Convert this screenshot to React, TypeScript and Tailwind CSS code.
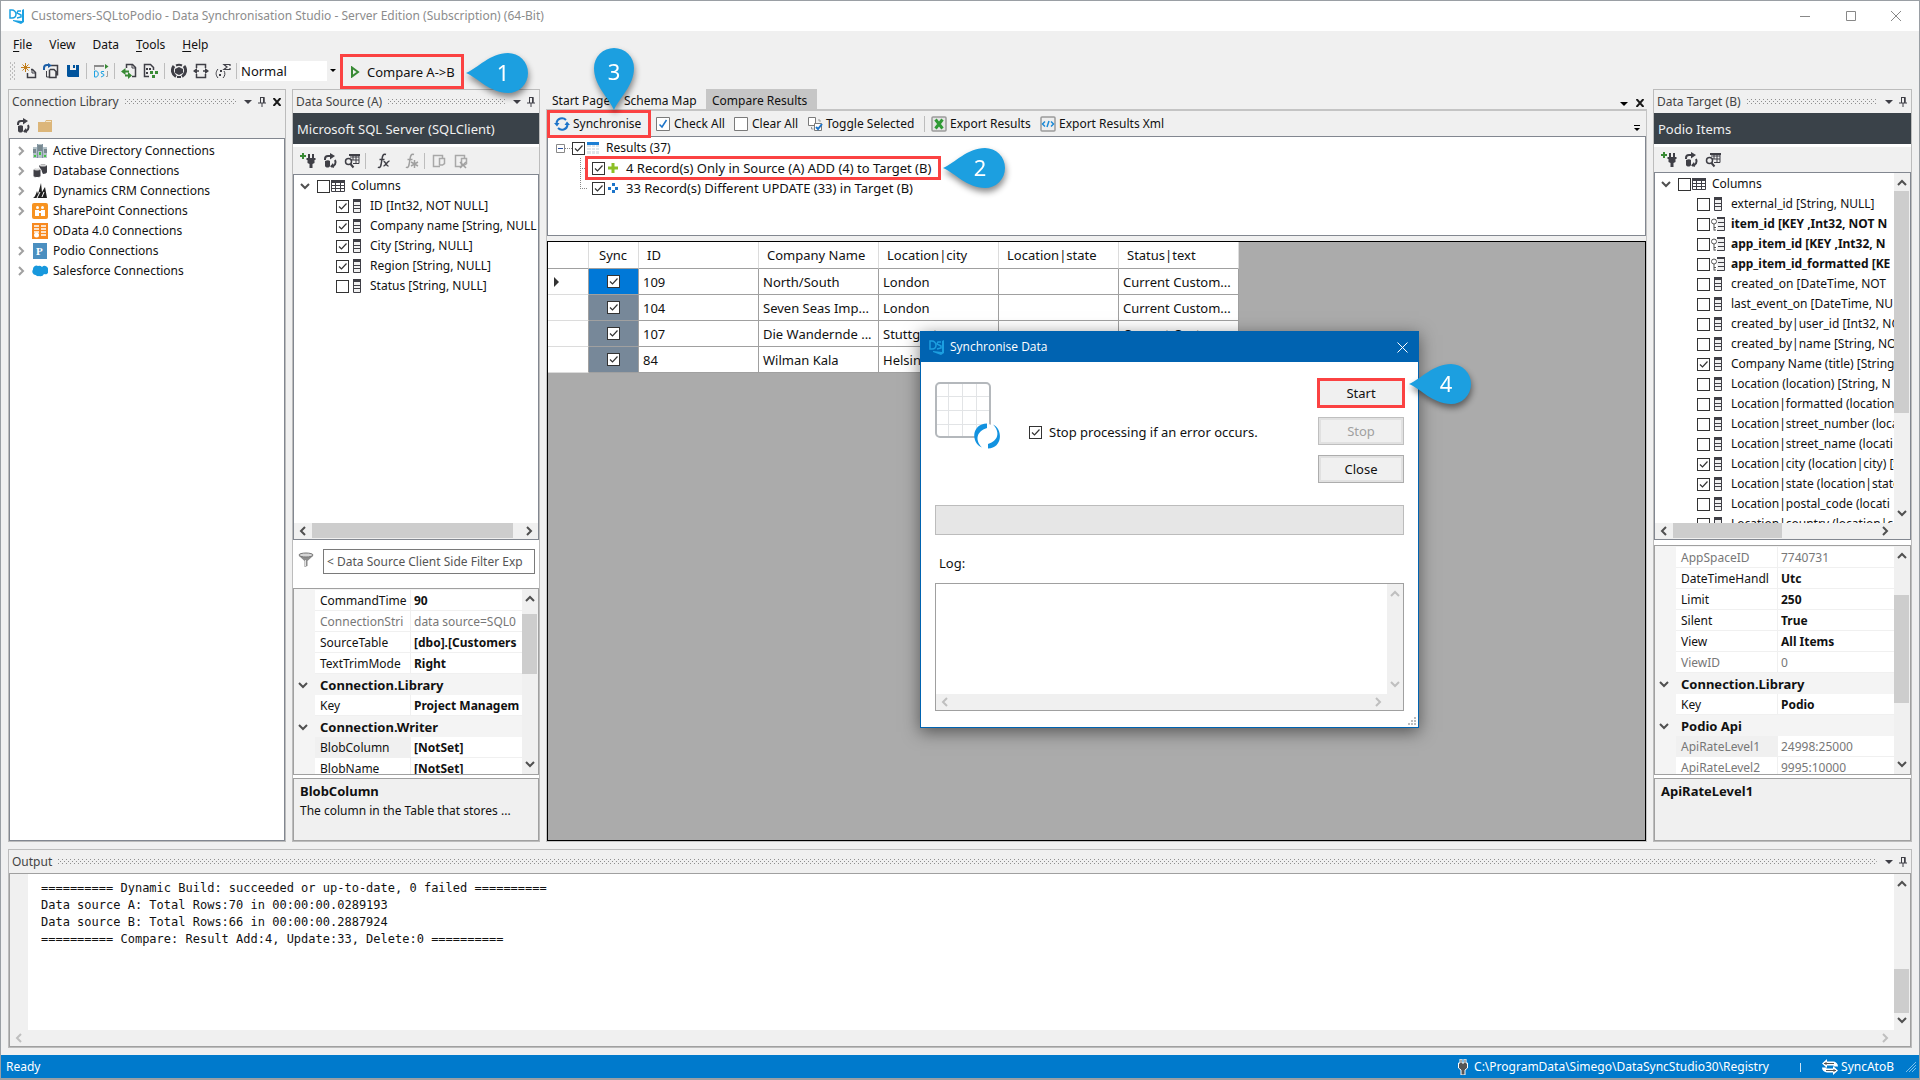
import { useId, type ReactNode } from "react";
import { clsx } from "clsx";

const ink = "#3f3f46";

/* ---------- icons ---------- */

function Icon({ w = 16, h = 16, children }: { w?: number; h?: number; children: ReactNode }) {
  return (
    <svg width={w} height={h} viewBox={`0 0 ${w} ${h}`} fill="none" className="shrink-0" aria-hidden="true">
      {children}
    </svg>
  );
}

function Logo({ color = "#1ba1e2" }: { color?: string }) {
  return (
    <Icon>
      <path d="M1 2v8h2c3 0 4-2 4-4S5 2 3 2z" stroke={color} strokeWidth="1.500" />
      <path d="M12 3H9L8 5l4 2v2l-4 1" stroke={color} strokeWidth="1.500" />
      <path d="M13 2l2-1v13l-3 2-8-3v-1l9 1z" fill={color} />
    </Icon>
  );
}

const NewIcon = () => (
  <Icon>
    <path d="M4.500 0v9M0 4.500h9M1.500 1.500l6 6M7.500 1.500l-6 6" stroke="#c27d1a" />
    <path d="M10 6.500h1.500l3 3v5h-8V10" stroke={ink} strokeWidth="1.500" />
    <path d="M11 6v4h4" stroke={ink} />
  </Icon>
);

const OpenIcon = () => (
  <Icon>
    <path d="M8 2.500h6.500v10M7 6.500h4l2 2v6H6.500v-8" stroke={ink} strokeWidth="1.500" />
    <path d="M1 7V5a3 3 0 0 1 3-3h2" stroke="#1c5fa8" strokeWidth="2" />
    <path d="M5 0l4 2.500-4 2.500z" fill="#1c5fa8" />
    <path d="M3.500 8v6H6" stroke={ink} />
  </Icon>
);

const SaveIcon = () => (
  <Icon>
    <path d="M2 2h12v12H3l-1-1z" fill="#00539c" />
    <path d="M5 2h6v5H5z" fill="#f0f0f0" />
    <path d="M8 2h2v3H8z" fill="#00539c" />
  </Icon>
);

const StudioIcon = () => (
  <Icon>
    <path d="M1.500 7V2.500h9M14.500 8v5.500H13" stroke="#a0a0a0" />
    <path d="M1 2h10v2H1z" fill="#8a8a8a" />
    <path d="M12 1l3.500 2.500L12 6z" fill="#388a34" />
    <path d="M1.500 8v6H3c3 0 3-6 0-6zM11 8.500H8.500L8 10l3 1.500v1L8 14" stroke="#1ba1e2" />
  </Icon>
);

const SwapDocIcon = () => (
  <Icon>
    <path d="M5.500 5V1.500h6l3 3v9H11" stroke={ink} strokeWidth="1.500" />
    <path d="M11 1v4h4" stroke={ink} />
    <path d="M2 8.500h6M4 12.500h5" stroke="#388a34" strokeWidth="2" />
    <path d="M4.500 5v7L0 8.500zM7 9v7l4-3.500z" fill="#388a34" />
  </Icon>
);

const DocDotsIcon = () => (
  <Icon>
    <path d="M6 13.500H1.500v-12h6l3 3V7" stroke={ink} strokeWidth="1.500" />
    <path d="M3 5h2v2H3zM3 9h2v2H3zM6 5h2v2H6z" fill={ink} />
    <path d="M7 8h3v3H7zM12 8h3v3h-3zM9 12h3v3H9z" fill="#388a34" />
  </Icon>
);

const BallIcon = () => (
  <Icon>
    <path d="M8 4l4 2v4l-4 2-4-2V6z" fill={ink} />
    <path d="M3 3A7 7 0 0 0 5 13.500M13 3a7 7 0 0 1-2 10.500" stroke={ink} strokeWidth="3" />
    <path d="M5 2.500a7 7 0 0 1 6 0M6 14h4" stroke={ink} strokeWidth="2" />
  </Icon>
);

const FitIcon = () => (
  <Icon>
    <path d="M3.500 5V1.500h9V5M3.500 11v3.500h9V11" stroke={ink} strokeWidth="1.500" />
    <path d="M3 8h3M10 8h3" stroke={ink} strokeWidth="1.500" />
    <path d="M4 5v6L0 8zM12 5v6l4-3z" fill={ink} />
  </Icon>
);

const SigmaIcon = () => (
  <Icon>
    <path d="M3 6C.500 9 .500 12 3 15M9 8c1.500 2 1 5-1 7" stroke={ink} />
    <path d="M5 7h2v2H5zM4 11h2v2H4z" fill={ink} />
    <path d="M15 3V1.500H9l3 2.500-3 2.500h6V5" stroke={ink} strokeWidth="1.200" />
  </Icon>
);

const RefreshIcon = () => (
  <Icon>
    <path d="M3 7V6a3 3 0 0 1 3-3h4M13 7c1.500 3 0 6-4 6.500" stroke={ink} strokeWidth="2" />
    <path d="M8 0l5 3-5 3.500z" fill={ink} />
    <path d="M3 8c2-1 4-1 5 0v5c-1 2-4 2-5 0z" fill={ink} />
    <path d="M11 10l-3 3.500 4 1.500z" fill={ink} />
  </Icon>
);

const PlugAddIcon = () => (
  <Icon>
    <path d="M3 0v6M0 3h6" stroke="#388a34" strokeWidth="2" />
    <path d="M9 1v4M13 1v4" stroke={ink} strokeWidth="2" />
    <path d="M6.500 5h9v2h-1v3l-2 1v4h-3v-4l-2-1V7h-1z" fill={ink} />
  </Icon>
);

const PreviewIcon = () => (
  <Icon>
    <path d="M6 1.500h9v9H9M6 4h9M6 7h9M9 3v4M12 3v8" stroke={ink} />
    <path d="M5 1h11v2H5z" fill={ink} />
    <circle cx="4.500" cy="8.500" r="3" fill="#f0f0f0" stroke={ink} strokeWidth="1.500" />
    <path d="M6.500 11l3 3.500" stroke={ink} strokeWidth="2" />
  </Icon>
);

const FxIcon = ({ off }: { off?: boolean }) => (
  <svg width="16" height="16" viewBox="0 0 16 16" fill="none" stroke={off ? "#a0a0a0" : ink} aria-hidden="true">
    <path d="M11 1.500C8 .500 7.500 3 7 6l-1 6c-.500 2.500-2 3-3 2M4.500 6.500h5" strokeWidth="1.500" />
    {off ? (
      <path d="M11.500 7v8M8 9l7 4M15 9l-7 4" strokeWidth="1.500" />
    ) : (
      <path d="M8.500 8.500c2-1 2.500 5 5 4.500M14.500 8c-2 0-4 5-6 5" strokeWidth="1.500" />
    )}
  </svg>
);

const ScriptIcon = ({ star }: { star?: boolean }) => (
  <Icon>
    <path d="M9 13.500H2.500v-11h9V5" stroke="#a8a8a8" strokeWidth="1.500" />
    <path d="M8.500 5.500h5v5l-2 1.500H8.500z" stroke="#a8a8a8" strokeWidth="1.500" />
    {star && <path d="M7 9l6 6M13 9l-6 6" stroke="#a0a0a0" strokeWidth="1.500" />}
  </Icon>
);

const FolderIcon = () => (
  <Icon>
    <path d="M1 4h7l1-2h6v12H1z" fill="#dcb67a" />
    <path d="M9 3.500h5" stroke="#f4e6c8" />
  </Icon>
);

const DirectoryIcon = () => (
  <Icon>
    <path d="M1 4h5v11H1zM10 4h5v11h-5zM5 1h6v14H5z" fill="#b4c2c8" />
    <path d="M6 3h4M6 5h4M6 7h4M1 7h3M1 9h3M12 7h3M12 9h3" stroke="#3e5058" />
    <path d="M7 9h2v3H7zM2 12h2v2H2zM12 12h2v2h-2z" fill="#43c443" />
    <path d="M5.500 1v14M10.500 1v14" stroke="#8093a0" />
  </Icon>
);

const DatabaseIcon = () => (
  <Icon>
    <path d="M7 3c0-2 8-2 8 0v6c0 1-2 2-4 2z" fill={ink} />
    <ellipse cx="11" cy="2.500" rx="3.500" ry="1" fill="#d8d8d8" />
    <path d="M1 7c0-2 8-2 8 0v6c0 2-8 2-8 0z" fill={ink} stroke="#fff" />
    <ellipse cx="5" cy="6.500" rx="3" ry="1" fill="#d8d8d8" />
  </Icon>
);

const DynamicsIcon = () => (
  <Icon>
    <path d="M1 15c2-1 3-4 4-7l1 3 3-11 1 9 3-5 2 11z" fill="#1f1f1f" />
    <path d="M5 15l3-6M10 14l2-5" stroke="#fff" />
  </Icon>
);

const SharePointIcon = () => (
  <Icon>
    <rect width="16" height="16" rx="2" fill="#f79321" />
    <path d="M3 7h4v6H3zM9 7h4v6H9zM7 8h2v2H7z" fill="#fff" />
    <circle cx="5.500" cy="4.500" r="1.500" fill="#fff" />
    <circle cx="10.500" cy="4.500" r="1.500" fill="#fff" />
  </Icon>
);

const ODataIcon = () => (
  <Icon>
    <rect width="16" height="16" fill="#f7891f" />
    <path d="M2 3h5M2 6h5M9 3h5M9 6h5M9 9h5M2 9h5M9 12h5" stroke="#fff" strokeWidth="1.500" />
    <circle cx="4.500" cy="12" r="2.500" fill="#fff" />
  </Icon>
);

const PodioIcon = () => (
  <Icon>
    <rect x="1" width="14" height="16" fill="#4b8fc0" />
    <text x="4" y="12" fontSize="11" fontWeight="700" fontFamily="Liberation Serif, serif" fill="#fff">
      P
    </text>
  </Icon>
);

const SalesforceIcon = () => (
  <Icon>
    <path
      d="M3.500 12A3.500 3.500 0 0 1 1 6.500 3.500 3.500 0 0 1 6 3a3.500 3.500 0 0 1 4 1 3.500 3.500 0 0 1 6 3 3 3 0 0 1-4 4 4 4 0 0 1-5 2 3.500 3.500 0 0 1-3.500-1z"
      fill="#1798dd"
    />
  </Icon>
);

const TableIcon = () => (
  <Icon w={14} h={12}>
    <path d="M.500.500h13v11H.500zM0 5.500h14M0 8.500h14M4.500 2v10M9.500 2v10" stroke={ink} />
    <path d="M0 0h14v3H0z" fill={ink} />
  </Icon>
);

const ColumnIcon = () => (
  <Icon w={8} h={14}>
    <path d="M.500.500h7v13h-7zM1 6.500h6M1 9.500h6" fill="#f0f0f0" stroke={ink} />
    <path d="M0 0h8v3H0z" fill={ink} />
  </Icon>
);

const KeyColumnIcon = () => (
  <Icon w={14} h={14}>
    <path d="M6 .500h7.500v13H6M7 5.500h6M7 9.500h6" stroke={ink} fill="#f0f0f0" />
    <path d="M6 0h8v2H6z" fill={ink} />
    <circle cx="3" cy="4.500" r="2.500" fill="#fff" stroke="#555" />
    <path d="M3 7v6.500M3 10.500h2M3 13h2" stroke="#555" />
  </Icon>
);

const SyncIcon = () => (
  <Icon>
    <path d="M2.500 7A5.500 5.500 0 0 1 12 4M13.500 9A5.500 5.500 0 0 1 4 12" stroke="#1d74c9" strokeWidth="2" />
    <path d="M0 7h5.500L3 10.500zM10.500 9H16l-3-3.500z" fill="#1d74c9" />
  </Icon>
);

const CheckAllIcon = () => (
  <Icon>
    <path d="M1.500 1.500h13v13h-13z" fill="#fff" stroke="#7a7a7a" />
    <path d="M4.500 8.500L7 11l4.500-7" stroke="#1d74c9" strokeWidth="1.500" />
  </Icon>
);

const ClearAllIcon = () => (
  <Icon>
    <path d="M1.500 1.500h13v13h-13z" fill="#fff" stroke="#7a7a7a" />
  </Icon>
);

const ToggleIcon = () => (
  <Icon>
    <path d="M1.500 1.500h7v8h-7z" fill="#fff" stroke="#7a7a7a" />
    <path d="M7.500 7.500h7v7h-7z" fill="#fff" stroke="#7a7a7a" />
    <path d="M9 11l2 2 4-5" stroke="#1d74c9" strokeWidth="2" />
    <path d="M4.500 11v2h2M11 4h2v2" stroke="#9a9a9a" />
  </Icon>
);

const ExcelIcon = () => (
  <Icon>
    <rect x="1" y="1" width="14" height="14" rx="1" fill="#e4e4e4" stroke="#9a9a9a" strokeWidth="1.500" />
    <path d="M4.500 3.500l7 9M11.500 3.500l-7 9" stroke="#2f9a35" strokeWidth="3" />
  </Icon>
);

const XmlIcon = () => (
  <Icon>
    <rect x="1" y="1" width="14" height="14" rx="1" fill="#eee" stroke="#9a9a9a" strokeWidth="1.500" />
    <path d="M5 5.500L2.500 8 5 10.500M11 5.500L13.500 8 11 10.500M9 5l-2 6" stroke="#1d8ad6" strokeWidth="1.500" />
  </Icon>
);

const FunnelIcon = () => (
  <Icon>
    <path d="M1 2h14v2L9.500 9v5l-3 1V9L1 4z" fill="#8c8c8c" />
    <ellipse cx="8" cy="3" rx="7" ry="2" fill="#d5d5d5" stroke="#777" />
    <path d="M7.500 8v6" stroke="#e0e0e0" />
  </Icon>
);

const ResultsIcon = () => (
  <Icon w={12} h={12}>
    <path d="M0 0h12v12H0z" fill="#dfe5ea" />
    <path d="M0 0h12v3H0z" fill="#1d7fd4" />
    <path d="M0 5.500h12M0 8.500h12M4.500 3v9M8.500 3v9" stroke="#fff" />
  </Icon>
);

function Caret({ dark }: { dark?: boolean }) {
  return (
    <Icon w={8} h={4}>
      <path d="M0 0h8L4 4z" fill={dark ? "#000" : ink} />
    </Icon>
  );
}

const Pin = () => (
  <Icon w={8} h={10}>
    <path d="M2 .500h4v5M2.500 0v6M0 6h8M4 6v4" stroke={ink} />
    <path d="M5 0h1.500v6H5z" fill={ink} />
  </Icon>
);

const BoldX = () => (
  <Icon w={8} h={8}>
    <path d="M.500 0l7 8M7.500 0l-7 8" stroke="#1a1a1a" strokeWidth="2" />
  </Icon>
);

const arrows = {
  up: "M1 7l4-4 4 4",
  down: "M1 3l4 4 4-4",
  left: "M7 1L3 5l4 4",
  right: "M3 1l4 4-4 4",
};

function Arrow({ dir, color = "#505050" }: { dir: keyof typeof arrows; color?: string }) {
  return (
    <Icon w={10} h={10}>
      <path d={arrows[dir]} stroke={color} strokeWidth="2" />
    </Icon>
  );
}

/* ---------- shared pieces ---------- */

function Check({ checked, label, id }: { checked?: boolean; label?: string; id?: string }) {
  return (
    <span className="grid h-[13px] w-[13px] shrink-0">
      <input
        type="checkbox"
        id={id}
        aria-label={label}
        defaultChecked={checked}
        className="peer h-[13px] w-[13px] appearance-none border border-[#333] bg-white [grid-area:1/1]"
      />
      <svg
        viewBox="0 0 13 13"
        fill="none"
        className="pointer-events-none z-1 hidden h-[13px] w-[13px] peer-checked:block [grid-area:1/1]"
      >
        <path d="M3 6.500L5.500 9l5-5.500" stroke="#333" strokeWidth="1.200" />
      </svg>
    </span>
  );
}

function Dots() {
  const id = useId();
  return (
    <svg className="h-[5px] min-w-0 flex-1" aria-hidden="true">
      <pattern id={id} width="4" height="4" patternUnits="userSpaceOnUse">
        <path d="M0 0h1v1H0zM2 2h1v1H2z" fill="#8f8f8f" />
      </pattern>
      <rect width="100%" height="5" fill={`url(#${id})`} />
    </svg>
  );
}

function PanelHeader({ title, closable }: { title: string; closable?: boolean }) {
  return (
    <header className="flex h-[23px] shrink-0 items-center pr-[2px] pl-[3px]">
      <h2 className="mr-[6px] text-[#444]">{title}</h2>
      <Dots />
      <button aria-label="Window position" className="ml-[6px] w-[14px] pl-[2px]">
        <Caret />
      </button>
      <button aria-label="Auto hide" className="flex w-[12px] justify-center">
        <Pin />
      </button>
      {closable && (
        <button aria-label="Close" className="ml-[3px] flex w-[12px] justify-center">
          <BoldX />
        </button>
      )}
    </header>
  );
}

function ToolButton({ label, children }: { label: string; children: ReactNode }) {
  return (
    <button aria-label={label} className="flex h-[22px] w-[22px] shrink-0 items-center justify-center">
      {children}
    </button>
  );
}

function Sep() {
  return <span className="mr-[3px] ml-[2px] h-4 w-px shrink-0 bg-[#bdbdbd]" />;
}

function VScroll({ thumb, off }: { thumb?: string; off?: boolean }) {
  const color = off ? "#bfbfbf" : "#505050";
  return (
    <div className="relative flex w-4 shrink-0 flex-col items-center justify-between bg-[#f0f0f0] py-[5px]" aria-hidden="true">
      <Arrow dir="up" color={color} />
      {thumb && <span className={clsx("absolute right-px left-0 bg-[#cdcdcd]", thumb)} />}
      <Arrow dir="down" color={color} />
    </div>
  );
}

function HScroll({ thumb, off, corner }: { thumb?: string; off?: boolean; corner?: boolean }) {
  const color = off ? "#bfbfbf" : "#505050";
  return (
    <div
      className={clsx("relative flex h-4 shrink-0 items-center justify-between bg-[#f0f0f0] pb-px pl-1", corner ? "pr-[20px]" : "pr-1")}
      aria-hidden="true"
    >
      <Arrow dir="left" color={color} />
      {thumb && <span className={clsx("absolute top-0 bottom-px bg-[#cdcdcd]", thumb)} />}
      <Arrow dir="right" color={color} />
    </div>
  );
}

function Marker({ n, down, className }: { n: number; down?: boolean; className: string }) {
  return (
    <span className={clsx("pointer-events-none absolute z-30 drop-shadow-[1px_4px_3px_rgba(0,0,0,0.45)]", className)}>
      {down ? (
        <svg width="40" height="62" viewBox="0 0 40 62">
          <path d="M20 62C15 50 0 38 0 20a20 20 0 0 1 40 0C40 38 25 50 20 62z" fill="#1c9fe0" />
          <text x="20" y="32" textAnchor="middle" fontSize="22" fill="#fff">
            {n}
          </text>
        </svg>
      ) : (
        <svg width="62" height="40" viewBox="0 0 62 40">
          <path d="M0 20C12 15 24 0 42 0a20 20 0 0 1 0 40C24 40 12 25 0 20z" fill="#1c9fe0" />
          <text x="37" y="28" textAnchor="middle" fontSize="22" fill="#fff">
            {n}
          </text>
        </svg>
      )}
    </span>
  );
}

/* ---------- data ---------- */

const menus = ["File", "View", "Data", "Tools", "Help"];
const underlined = ["File", "Tools", "Help"];

const connections = [
  { name: "Active Directory Connections", icon: <DirectoryIcon />, open: true },
  { name: "Database Connections", icon: <DatabaseIcon />, open: true },
  { name: "Dynamics CRM Connections", icon: <DynamicsIcon />, open: true },
  { name: "SharePoint Connections", icon: <SharePointIcon />, open: true },
  { name: "OData 4.0 Connections", icon: <ODataIcon />, open: false },
  { name: "Podio Connections", icon: <PodioIcon />, open: true },
  { name: "Salesforce Connections", icon: <SalesforceIcon />, open: true },
];

type Column = { name: string; checked?: boolean; key?: boolean };

const sourceColumns: Column[] = [
  { name: "ID [Int32, NOT NULL]", checked: true },
  { name: "Company name [String, NULL", checked: true },
  { name: "City [String, NULL]", checked: true },
  { name: "Region [String, NULL]", checked: true },
  { name: "Status [String, NULL]" },
];

const targetColumns: Column[] = [
  { name: "external_id [String, NULL]" },
  { name: "item_id [KEY ,Int32, NOT N", key: true },
  { name: "app_item_id [KEY ,Int32, N", key: true },
  { name: "app_item_id_formatted [KE", key: true },
  { name: "created_on [DateTime, NOT" },
  { name: "last_event_on [DateTime, NU" },
  { name: "created_by|user_id [Int32, NO" },
  { name: "created_by|name [String, NO" },
  { name: "Company Name (title) [String", checked: true },
  { name: "Location (location) [String, N" },
  { name: "Location|formatted (location" },
  { name: "Location|street_number (loca" },
  { name: "Location|street_name (locati" },
  { name: "Location|city (location|city) [S", checked: true },
  { name: "Location|state (location|state", checked: true },
  { name: "Location|postal_code (locati" },
  { name: "Location|country (location|c" },
];

type Prop = { name: string; value?: string; muted?: boolean; selected?: boolean };

const sourceProps: Prop[] = [
  { name: "CommandTime", value: "90" },
  { name: "ConnectionStri", value: "data source=SQL0", muted: true },
  { name: "SourceTable", value: "[dbo].[Customers" },
  { name: "TextTrimMode", value: "Right" },
  { name: "Connection.Library" },
  { name: "Key", value: "Project Managem" },
  { name: "Connection.Writer" },
  { name: "BlobColumn", value: "[NotSet]", selected: true },
  { name: "BlobName", value: "[NotSet]" },
];

const targetProps: Prop[] = [
  { name: "AppSpaceID", value: "7740731", muted: true },
  { name: "DateTimeHandl", value: "Utc" },
  { name: "Limit", value: "250" },
  { name: "Silent", value: "True" },
  { name: "View", value: "All Items" },
  { name: "ViewID", value: "0", muted: true },
  { name: "Connection.Library" },
  { name: "Key", value: "Podio" },
  { name: "Podio Api" },
  { name: "ApiRateLevel1", value: "24998:25000", muted: true, selected: true },
  { name: "ApiRateLevel2", value: "9995:10000", muted: true },
];

const records = [
  ["109", "North/South", "London", "", "Current Custom..."],
  ["104", "Seven Seas Imp...", "London", "", "Current Custom..."],
  ["107", "Die Wandernde ...", "Stuttgart", "", "Current Custom..."],
  ["84", "Wilman Kala", "Helsinki", "", "Current Custom..."],
];

const log = [
  "========== Dynamic Build: succeeded or up-to-date, 0 failed ==========",
  "Data source A: Total Rows:70 in 00:00:00.0289193",
  "Data source B: Total Rows:66 in 00:00:00.2887924",
  "========== Compare: Result Add:4, Update:33, Delete:0 ==========",
];

/* ---------- panels ---------- */

function TitleBar() {
  return (
    <div className="flex h-[30px] shrink-0 items-center bg-white pl-2 text-[#8c8c8c]">
      <Logo />
      <h1 className="ml-[6px] flex-1">Customers-SQLtoPodio - Data Synchronisation Studio - Server Edition (Subscription) (64-Bit)</h1>
      <button aria-label="Minimise" className="flex w-[46px] justify-center">
        <Icon w={10} h={10}>
          <path d="M0 5.500h10" stroke="#888" />
        </Icon>
      </button>
      <button aria-label="Maximise" className="flex w-[45px] justify-center">
        <Icon w={10} h={10}>
          <path d="M.500.500h9v9h-9z" stroke="#888" />
        </Icon>
      </button>
      <button aria-label="Close window" className="flex w-[46px] justify-center">
        <Icon w={10} h={10}>
          <path d="M0 0l10 10M10 0L0 10" stroke="#888" />
        </Icon>
      </button>
    </div>
  );
}

function MenuBar() {
  return (
    <nav className="flex h-[24px] shrink-0 items-end gap-[17px] pl-3">
      {menus.map((m) => (
        <button key={m} className="leading-5">
          {underlined.includes(m) ? (
            <>
              <span className="underline underline-offset-2">{m[0]}</span>
              {m.slice(1)}
            </>
          ) : (
            m
          )}
        </button>
      ))}
    </nav>
  );
}

function MainToolbar() {
  return (
    <div className="flex h-[34px] shrink-0 items-start pl-[7px]">
      <div className="flex h-[31px] items-center">
        <svg width="10" height="18" aria-hidden="true">
          <path
            d="M2 1h1M6 1h1M4 3h1M2 5h1M6 5h1M4 7h1M2 9h1M6 9h1M4 11h1M2 13h1M6 13h1M4 15h1M2 17h1M6 17h1"
            stroke="#888"
          />
        </svg>
        <ToolButton label="New project"><NewIcon /></ToolButton>
        <ToolButton label="Open project"><OpenIcon /></ToolButton>
        <ToolButton label="Save"><SaveIcon /></ToolButton>
        <Sep />
        <ToolButton label="New window"><StudioIcon /></ToolButton>
        <Sep />
        <ToolButton label="Swap sources"><SwapDocIcon /></ToolButton>
        <ToolButton label="Project automation"><DocDotsIcon /></ToolButton>
        <Sep />
        <ToolButton label="Build"><BallIcon /></ToolButton>
        <ToolButton label="Fit columns"><FitIcon /></ToolButton>
        <ToolButton label="Calculated columns"><SigmaIcon /></ToolButton>
        <Sep />
        <div className="grid h-5 w-[98px] items-center bg-white">
          <select aria-label="Compare mode" className="h-5 w-full appearance-none pl-px text-[13px] [grid-area:1/1]">
            <option>Normal</option>
          </select>
          <span className="pointer-events-none flex h-5 w-[11px] items-center justify-center justify-self-end bg-[#f0f0f0] [grid-area:1/1]">
            <Icon w={6} h={3}>
              <path d="M0 0h6L3 3z" fill="#000" />
            </Icon>
          </span>
        </div>
      </div>
      <div className="relative ml-[2px] -mt-px">
        <button className="flex h-[35px] w-[124px] items-center gap-[7px] border-3 border-[#fb4242] pl-2 text-[13px] whitespace-nowrap">
          <Icon w={9} h={12}>
            <path d="M1 1.500l6 4.500-6 4.500z" stroke="#388a34" strokeWidth="2" />
          </Icon>
          Compare A-&gt;B
        </button>
        <Marker n={1} className="-top-px left-full ml-[2px]" />
      </div>
    </div>
  );
}

function ConnectionLibrary() {
  return (
    <section className="flex w-[278px] shrink-0 flex-col border border-[#bcbcbc]">
      <PanelHeader title="Connection Library" closable />
      <div className="flex h-[25px] shrink-0 items-center pl-[3px]">
        <ToolButton label="Refresh"><RefreshIcon /></ToolButton>
        <ToolButton label="New folder"><FolderIcon /></ToolButton>
      </div>
      <ul className="flex-1 border border-[#828790] bg-white pt-[2px]">
        {connections.map((c) => (
          <li key={c.name} className="flex h-5 items-center">
            <span className="flex w-[22px] justify-center">{c.open && <Arrow dir="right" color="#a0a0a0" />}</span>
            {c.icon}
            <span className="ml-[5px]">{c.name}</span>
          </li>
        ))}
      </ul>
    </section>
  );
}

function ColumnTree({ columns }: { columns: Column[] }) {
  return (
    <ul className="min-w-0 flex-1 overflow-hidden pt-px">
      <li className="flex h-5 items-center">
        <span className="mr-px flex w-[22px] justify-center">
          <Arrow dir="down" />
        </span>
        <Check label="Columns" />
        <span className="flex w-4 justify-center">
          <TableIcon />
        </span>
        <span className="ml-[5px]">Columns</span>
      </li>
      {columns.map((c) => (
        <li key={c.name} className="flex h-5 items-center pl-[42px] whitespace-nowrap">
          <Check checked={c.checked} label={c.name} />
          <span className="flex w-4 shrink-0 justify-center">{c.key ? <KeyColumnIcon /> : <ColumnIcon />}</span>
          <span className={clsx("ml-[5px]", c.key && "font-bold")}>{c.name}</span>
        </li>
      ))}
    </ul>
  );
}

function PropertyGrid({ rows, nameWidth, thumb }: { rows: Prop[]; nameWidth: string; thumb: string }) {
  return (
    <div className="flex h-full border border-[#a0a0a0] bg-[#f4f4f4]">
      <div className="min-w-0 flex-1 overflow-hidden pt-px">
        <table className="w-full table-fixed border-separate border-spacing-0">
          <colgroup>
            <col className="w-[21px]" />
            <col className={nameWidth} />
            <col />
          </colgroup>
          <tbody>
            {rows.map((r) =>
              r.value === undefined ? (
                <tr key={r.name} className="h-[21px]">
                  <td className="pl-1">
                    <Arrow dir="down" />
                  </td>
                  <th colSpan={2} className="p-0 pl-[5px] text-left text-[13px] leading-5 font-bold">
                    {r.name}
                  </th>
                </tr>
              ) : (
                <tr key={r.name} className={clsx("h-[21px]", r.muted && "text-[#777]")}>
                  <td />
                  <th
                    className={clsx(
                      "overflow-hidden border-r border-b border-[#f0f0f0] p-0 pt-[2px] pl-[5px] text-left leading-[18px] font-normal whitespace-nowrap",
                      r.selected ? "bg-[#f0f0f0]" : "bg-white",
                    )}
                  >
                    {r.name}
                  </th>
                  <td
                    className={clsx(
                      "overflow-hidden border-b border-[#f0f0f0] bg-white p-0 pt-[2px] pl-[3px] leading-[18px] whitespace-nowrap",
                      !r.muted && "font-bold",
                    )}
                  >
                    {r.value}
                  </td>
                </tr>
              ),
            )}
          </tbody>
        </table>
      </div>
      <VScroll thumb={thumb} />
    </div>
  );
}

function Description({ title, text }: { title: string; text?: string }) {
  return (
    <div className="mt-[3px] h-[63px] shrink-0 border border-[#a0a0a0] bg-[#f0f0f0] px-[6px] pt-[2px] leading-5">
      <h3 className="text-[13px] font-bold">{title}</h3>
      <p>{text}</p>
    </div>
  );
}

function DataSource() {
  return (
    <section className="flex w-[248px] shrink-0 flex-col border border-[#bcbcbc] bg-[#f0f0f0]">
      <PanelHeader title="Data Source (A)" />
      <div className="h-[31px] shrink-0 bg-[#3a4249] pl-1 text-[13px] leading-8 text-[#f0f0f0]">Microsoft SQL Server (SQLClient)</div>
      <div className="flex h-[30px] shrink-0 items-center border-t-3 border-white pl-1">
        <ToolButton label="Connect"><PlugAddIcon /></ToolButton>
        <ToolButton label="Refresh source"><RefreshIcon /></ToolButton>
        <ToolButton label="Preview source"><PreviewIcon /></ToolButton>
        <Sep />
        <span className="w-[3px]" />
        <ToolButton label="Add expression"><FxIcon /></ToolButton>
        <span className="w-[6px]" />
        <ToolButton label="Edit expression"><FxIcon off /></ToolButton>
        <Sep />
        <ToolButton label="Add lookup"><ScriptIcon /></ToolButton>
        <ToolButton label="Remove lookup"><ScriptIcon star /></ToolButton>
      </div>
      <div className="flex min-h-0 flex-1 flex-col border border-[#828790] bg-white">
        <div className="flex min-h-0 flex-1">
          <ColumnTree columns={sourceColumns} />
        </div>
        <HScroll thumb="left-[18px] right-[25px]" />
      </div>
      <div className="flex h-[48px] shrink-0 items-start bg-white pt-[9px] pr-1 pl-[5px]">
        <span className="mt-[3px]">
          <FunnelIcon />
        </span>
        <input
          aria-label="Source filter"
          defaultValue="< Data Source Client Side Filter Exp"
          className="ml-[9px] h-[25px] min-w-0 flex-1 border border-[#7a7a7a] bg-white px-[3px] text-[#555]"
        />
      </div>
      <div className="h-[187px] shrink-0 bg-white">
        <PropertyGrid rows={sourceProps} nameWidth="w-[96px]" thumb="top-[25px] h-[60px]" />
      </div>
      <div className="bg-white">
        <Description title="BlobColumn" text="The column in the Table that stores ..." />
      </div>
    </section>
  );
}

function DataTarget() {
  return (
    <section className="flex w-[259px] shrink-0 flex-col border border-[#bcbcbc] bg-[#f0f0f0]">
      <PanelHeader title="Data Target (B)" />
      <div className="h-[31px] shrink-0 bg-[#3a4249] pl-1 text-[13px] leading-8 text-[#f0f0f0]">Podio Items</div>
      <div className="flex h-[28px] shrink-0 items-center border-t-3 border-white pl-1">
        <ToolButton label="Connect target"><PlugAddIcon /></ToolButton>
        <ToolButton label="Refresh target"><RefreshIcon /></ToolButton>
        <ToolButton label="Preview target"><PreviewIcon /></ToolButton>
      </div>
      <div className="flex min-h-0 flex-1 flex-col border border-[#828790] bg-white">
        <div className="flex min-h-0 flex-1">
          <ColumnTree columns={targetColumns} />
          <VScroll thumb="top-[18px] h-[222px]" />
        </div>
        <HScroll thumb="left-[18px] w-[109px]" corner />
      </div>
      <div className="h-[235px] shrink-0 bg-white pt-[5px]">
        <PropertyGrid rows={targetProps} nameWidth="w-[102px]" thumb="top-[49px] h-[108px]" />
      </div>
      <div className="bg-white">
        <Description title="ApiRateLevel1" />
      </div>
    </section>
  );
}

function Branch({ last }: { last?: boolean }) {
  return (
    <svg width="8" height="20" className="shrink-0" aria-hidden="true">
      <path d={last ? "M.5 0v10M0 10.500h8" : "M.5 0v20M0 10.500h8"} stroke="#888" strokeDasharray="1 1" fill="none" />
    </svg>
  );
}

function ResultsTree() {
  return (
    <ul className="h-[100px] shrink-0 border border-[#828790] bg-white pt-px pl-2">
      <li className="flex h-5 items-center">
        <Icon w={9} h={9}>
          <path d="M.500.500h8v8h-8z" stroke="#888" />
          <path d="M2 4.500h5" stroke="#2a4fa0" />
        </Icon>
        <span className="w-[7px] border-t border-dotted border-[#888]" />
        <Check checked label="Results" />
        <span className="flex w-4 justify-center">
          <ResultsIcon />
        </span>
        <span className="ml-[5px]">Results (37)</span>
      </li>
      <li className="flex h-5 items-center pl-[24px]">
        <Branch />
        <span className="relative flex h-[18px] w-[350px] items-center pl-1 text-[13px] whitespace-nowrap outline-3 outline-[#fb4242]">
          <Check checked label="Add records" />
          <span className="flex w-4 justify-center">
            <Icon w={10} h={10}>
              <path d="M5 0v10M0 5h10" stroke="#8cbf26" strokeWidth="3" />
            </Icon>
          </span>
          <span className="ml-[5px]">4 Record(s) Only in Source (A) ADD (4) to Target (B)</span>
          <Marker n={2} className="-top-[11px] left-full ml-[5px]" />
        </span>
      </li>
      <li className="flex h-5 items-center pl-[24px]">
        <Branch last />
        <span className="flex items-center pl-1 text-[13px]">
          <Check checked label="Update records" />
          <span className="flex w-4 justify-center">
            <Icon w={10} h={10}>
              <path d="M4 0h3v3H4zM4 7h3v3H4zM0 4h3v3H0zM7 4h3v3H7z" fill="#1d74c9" />
            </Icon>
          </span>
          <span className="ml-[5px]">33 Record(s) Different UPDATE (33) in Target (B)</span>
        </span>
      </li>
    </ul>
  );
}

function RecordGrid() {
  return (
    <div className="min-h-0 flex-1 overflow-hidden border border-black bg-[#ababab]">
      <table className="w-[691px] table-fixed border-separate border-spacing-0 bg-white text-left text-[13px]">
        <colgroup>
          <col className="w-[41px]" />
          <col className="w-[50px]" />
          <col span={5} />
        </colgroup>
        <thead>
          <tr className="h-[27px] [&>th]:border-r [&>th]:border-b [&>th]:border-r-[#dcdcdc] [&>th]:border-b-[#a0a0a0] [&>th]:p-0 [&>th]:pl-2 [&>th]:font-normal">
            <th aria-label="Row" />
            <th className="!pl-[10px]">Sync</th>
            <th>ID</th>
            <th>Company Name</th>
            <th>Location|city</th>
            <th>Location|state</th>
            <th>Status|text</th>
          </tr>
        </thead>
        <tbody>
          {records.map((cells, i) => (
            <tr key={cells[0]} className="h-[26px]">
              <td className="border-r border-b border-r-[#a0a0a0] border-b-[#dcdcdc] p-0 pl-[6px]">
                {i === 0 && (
                  <Icon w={5} h={10}>
                    <path d="M0 0l5 5-5 5z" fill="#333" />
                  </Icon>
                )}
              </td>
              <td className={clsx("border-r border-b border-[#a0a0a0] p-0 pl-[18px]", i === 0 ? "bg-[#0078d7]" : "bg-[#778899]")}>
                <Check checked label={`Sync ${cells[0]}`} />
              </td>
              {cells.map((c, j) => (
                <td key={j} className="border-r border-b border-[#a0a0a0] p-0 pl-1 whitespace-nowrap">
                  {c}
                </td>
              ))}
            </tr>
          ))}
        </tbody>
      </table>
    </div>
  );
}

function Workspace() {
  const tool = "flex shrink-0 items-center gap-[3px] whitespace-nowrap";
  return (
    <main className="relative flex min-w-0 flex-1 flex-col">
      <div className="flex h-5 shrink-0 items-end" role="tablist">
        <button role="tab" className="w-[72px] pl-[6px] text-left whitespace-nowrap">Start Page</button>
        <button role="tab" className="w-[88px] pl-[6px] text-left whitespace-nowrap">Schema Map</button>
        <button role="tab" aria-selected="true" className="h-5 w-[111px] bg-[#c6c6c6] pt-[3px] pl-[6px] text-left">
          Compare Results
        </button>
        <span className="flex-1" />
        <button aria-label="Tab list" className="mr-2 pb-[3px]">
          <Caret dark />
        </button>
        <button aria-label="Close tab" className="mr-[3px] pb-[2px]">
          <BoldX />
        </button>
      </div>
      <div className="flex min-h-0 flex-1 flex-col border border-t-2 border-[#c4c4c4]">
        <div className="flex h-[25px] shrink-0 items-center pl-[3px]">
          <button className="relative z-20 flex h-[22px] w-[98px] items-center gap-[3px] pl-1 outline-3 outline-[#fb4242]">
            <SyncIcon />
            Synchronise
            <Marker n={3} down className="bottom-full left-[44px] mb-[3px]" />
          </button>
          <button className={clsx(tool, "ml-[7px] w-[78px]")}><CheckAllIcon />Check All</button>
          <button className={clsx(tool, "w-[74px]")}><ClearAllIcon />Clear All</button>
          <button className={clsx(tool, "w-[117px]")}><ToggleIcon />Toggle Selected</button>
          <span className="mr-[6px] h-4 w-px bg-[#bdbdbd]" />
          <button className={clsx(tool, "w-[109px]")}><ExcelIcon />Export Results</button>
          <button className={tool}><XmlIcon />Export Results Xml</button>
          <span className="flex-1" />
          <button aria-label="Toolbar options" className="mt-[10px] mr-[6px]">
            <Icon w={6} h={7}>
              <path d="M0 .500h6" stroke="#000" />
              <path d="M0 3h6L3 6z" fill="#000" />
            </Icon>
          </button>
        </div>
        <ResultsTree />
        <div className="h-[5px] shrink-0" />
        <RecordGrid />
      </div>
      <SyncDialog />
    </main>
  );
}

function SyncDialog() {
  const button = "h-7 w-[86px] border bg-[#f0f0f0] shadow-[inset_0_0_0_2px_#e1e1e1]";
  return (
    <div
      role="dialog"
      aria-label="Synchronise Data"
      className="absolute top-[242px] left-[374px] z-20 flex w-[499px] flex-col border border-[#0063b1] bg-white text-[13px] shadow-[0_4px_16px_rgba(0,0,0,0.5)]"
    >
      <div className="flex h-[30px] items-center bg-[#0063b1] pr-[10px] pl-2 font-['Open_Sans',sans-serif] text-[12px] text-white">
        <Logo color="#1c9fe0" />
        <span className="ml-[5px] flex-1">Synchronise Data</span>
        <button aria-label="Close dialog">
          <Icon w={11} h={11}>
            <path d="M.500.500l10 10M10.500.500l-10 10" stroke="#fff" />
          </Icon>
        </button>
      </div>
      <div className="px-[14px] pt-[17px] pb-4">
        <div className="flex h-[126px]">
          <svg width="68" height="72" viewBox="0 0 68 72" fill="none" className="mt-[3px]" aria-hidden="true">
            <rect x="1" y="1" width="54" height="54" rx="4" stroke="#b4b8bc" strokeWidth="2" />
            <path d="M13.500 2v52M27.500 2v52M41.500 2v52M2 14.500h52M2 28.500h52M2 42.500h52" stroke="#e2e4e6" />
            <circle cx="52" cy="54" r="12" fill="#fff" />
            <path
              d="M52 41.500C36 42 36 61 47 65.500c-7-7-6-16 5-19.500zM53 66.500C68 66 68 47 58 42.500c7 7 6 16-5 19.500z"
              fill="#1292e0"
            />
          </svg>
          <div className="mt-[43px] ml-[26px] flex h-5 flex-1 items-center">
            <Check checked id="stop-on-error" />
            <label htmlFor="stop-on-error" className="ml-[7px]">
              Stop processing if an error occurs.
            </label>
          </div>
          <div className="flex flex-col gap-[10px]">
            <div className="relative">
              <button className="h-7 w-[86px] bg-[#f0f0f0] outline-3 -outline-offset-2 outline-[#fb4242]">Start</button>
              <Marker n={4} className="-top-[15px] left-full ml-[5px]" />
            </div>
            <button disabled className={clsx(button, "border-[#bfbfbf] text-[#a0a0a0]")}>
              Stop
            </button>
            <button className={clsx(button, "border-[#adadad]")}>Close</button>
          </div>
        </div>
        <div role="progressbar" aria-label="Progress" className="h-[30px] border border-[#bcbcbc] bg-[#e6e6e6]" />
        <label htmlFor="log" className="mt-[18px] mb-[10px] block pl-1 leading-5">
          Log:
        </label>
        <div className="flex h-[128px] flex-col border border-[#a0a0a0]">
          <div className="flex min-h-0 flex-1">
            <textarea id="log" className="min-w-0 flex-1 resize-none bg-white" readOnly />
            <VScroll off />
          </div>
          <HScroll off corner />
        </div>
      </div>
      <svg width="8" height="8" className="absolute right-[2px] bottom-[2px]" aria-hidden="true">
        <path d="M6 0h2v2H6zM3 3h2v2H3zM6 3h2v2H6zM0 6h2v2H0zM3 6h2v2H3zM6 6h2v2H6z" fill="#bdbdbd" />
      </svg>
    </div>
  );
}

function Output() {
  return (
    <section className="mx-[7px] my-[7px] flex h-[199px] shrink-0 flex-col border border-[#bcbcbc]">
      <PanelHeader title="Output" />
      <div className="flex min-h-0 flex-1 flex-col border border-[#a0a0a0] bg-white">
        <div className="flex min-h-0 flex-1">
          <div className="w-[18px] bg-[#f0f0f0]" />
          <pre className="flex-1 pt-[6px] pl-[13px] font-['DejaVu_Sans_Mono','Liberation_Mono',monospace] text-[12px] leading-[17px]">
            {log.join("\n")}
          </pre>
          <VScroll thumb="top-[95px] h-[44px]" />
        </div>
        <HScroll off corner />
      </div>
    </section>
  );
}

function StatusBar() {
  return (
    <footer className="flex h-[23px] shrink-0 items-center bg-[#007acc] pt-px pr-[3px] pl-[5px] text-white">
      <span className="flex-1">Ready</span>
      <Icon w={10} h={16}>
        <path d="M2 0h2v4h2V0h2v4h1.500v5L7 11v5H3v-5L.500 9V4H2z" fill="#555" stroke="#fff" />
      </Icon>
      <span className="ml-[6px] w-[305px]">C:\ProgramData\Simego\DataSyncStudio30\Registry</span>
      <span className="mx-[21px] h-[9px] w-px bg-white/80" />
      <Icon>
        <path d="M4 4.500h7a3 3 0 0 1 3 3M12 11.500H5a3 3 0 0 1-3-3" stroke="#fff" strokeWidth="4" />
        <path d="M5 0v9L0 4.500zM11 7v9l5-4.500z" fill="#fff" />
        <path d="M2 4.500h10M4 11.500h10M4 3v3M12 10v3" stroke="#555" />
      </Icon>
      <span className="mr-3 ml-[3px]">SyncAtoB</span>
      <svg width="10" height="10" aria-hidden="true">
        <path d="M0 10L10 0M3 10l7-7M6 10l4-4" stroke="#7fc0ea" />
      </svg>
    </footer>
  );
}

export default function App() {
  return (
    <div className="flex h-screen flex-col overflow-hidden border-x border-t border-b-2 border-[#9a9fa4] bg-[#f0f0f0] font-['Noto_Sans',sans-serif] text-[12px] leading-4 text-[#111]">
      <TitleBar />
      <MenuBar />
      <MainToolbar />
      <div className="flex min-h-0 flex-1 gap-[6px] px-[7px]">
        <ConnectionLibrary />
        <DataSource />
        <Workspace />
        <DataTarget />
      </div>
      <Output />
      <StatusBar />
    </div>
  );
}
